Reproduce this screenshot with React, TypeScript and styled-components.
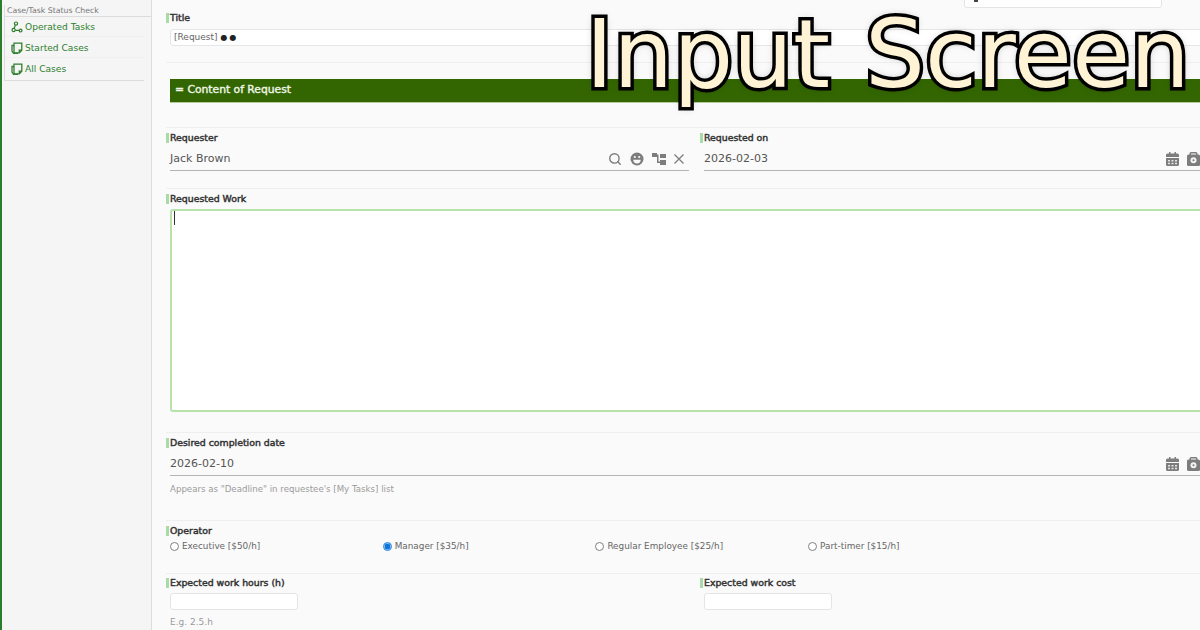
import React from "react";
import styled, { createGlobalStyle } from "styled-components";
import { Search } from "lucide-react";

const GlobalStyle = createGlobalStyle`
    html, body {
        margin: 0;
        padding: 0;
        width: 1200px;
        height: 630px;
        overflow: hidden;
        background: #fafafa;
        font-family: "DejaVu Sans", sans-serif;
    }
`

const Page = styled.div`
    display: flex;
    position: relative;
    width: 1200px;
    height: 630px;
    overflow: hidden;
    border-left: 2px solid #2a7d2a;
    box-sizing: border-box;
`

const Sidebar = styled.aside`
    flex: 0 0 150px;
    box-sizing: border-box;
    padding: 5px 0 0 2px;
    background: #f5f5f5;
    border-right: 1px solid #dddddd;
`

const SideTitle = styled.div`
    height: 12px;
    box-sizing: border-box;
    padding: 1px 0 0 2px;
    border-left: 1px solid #dcdcdc;
    border-bottom: 1px solid #dcdcdc;
    font-size: 7.75px;
    line-height: 10px;
    color: #777777;
`

const SideList = styled.ul`
    margin: 0;
    padding: 0;
    width: 139px;
    list-style: none;
    border-left: 1px solid #dcdcdc;
    border-bottom: 1px solid #dcdcdc;
`

const SideItem = styled.li`
    display: flex;
    align-items: center;
    gap: 2px;
    height: 20px;
    padding: 1px 0 0 6px;
    box-sizing: border-box;
    border-bottom: 1px solid #efefef;
    margin-bottom: 1px;
    font-size: 9.1px;
    color: #2f7f2f;

    &:last-child {
        height: 21px;
        padding: 0 0 2px 6px;
        border-bottom: 0;
        margin-bottom: 0;
    }
`

const Main = styled.main`
    flex: 0 0 1068px;
    box-sizing: border-box;
    padding: 0 0 0 14px;
`

const TopSearch = styled.div`
    position: absolute;
    top: -10px;
    left: 962px;
    box-sizing: border-box;
    width: 198px;
    height: 18px;
    background: #ffffff;
    border: 1px solid #e4e4e4;
    border-radius: 3px;
`

const SearchTip = styled.div`
    width: 4px;
    height: 2px;
    margin: 9px 0 0 9px;
    background: #444444;
`

const Section = styled.section<{ $height: number; $pad?: number; $first?: boolean }>`
    box-sizing: border-box;
    height: ${(p) => p.$height}px;
    padding-top: ${(p) => p.$pad ?? 5}px;
    border-top: ${(p) => (p.$first ? "0" : "1px solid #efefef")};
`

const Columns = styled.div`
    display: grid;
    grid-template-columns: 534px 534px;
`

// bold here is smeared regular, the original has no real bold face
const Label = styled.div`
    height: 10px;
    padding-left: 1px;
    border-left: 3px solid #a9dba9;
    font-size: 9.35px;
    line-height: 10px;
    color: #333333;
    -webkit-text-stroke: 0.45px #333333;
`

const TitleInput = styled.div`
    box-sizing: border-box;
    height: 17px;
    margin: 6px 0 0 4px;
    padding-left: 3px;
    background: #ffffff;
    border: 1px solid #e6e6e6;
    border-radius: 3px;
    font-size: 9px;
    line-height: 14px;
    color: #666666;
`

const Dots = styled.span`
    font-size: 8px;
    letter-spacing: 2px;
    color: #222222;
`

const BannerWrap = styled.div`
    height: 65px;
    padding: 16px 0 0 4px;
    box-sizing: border-box;
    border-top: 1px solid #efefef;
`

const Banner = styled.div`
    box-sizing: border-box;
    height: 24px;
    padding-left: 5px;
    background: #336600;
    border-bottom: 1px solid #b5cba0;
    font-size: 10.75px;
    line-height: 21px;
    color: #eef5e6;
    -webkit-text-stroke: 0.4px #eef5e6;
`

const ValueRow = styled.div<{ $width?: number }>`
    display: flex;
    align-items: center;
    justify-content: space-between;
    box-sizing: border-box;
    width: ${(p) => p.$width ?? 1053}px;
    height: 27px;
    margin: 1px 0 0 4px;
    padding: 3px 5px 0 0;
    border-bottom: 1px solid #b4b4b4;
    font-size: 11px;
    color: #555555;
`

const Icons = styled.div`
    display: flex;
    align-items: center;
    gap: 8px;
    color: #7d7d7d;
`

const WorkArea = styled.div`
    box-sizing: border-box;
    height: 203px;
    margin: 5px 0 0 4px;
    padding: 0 2px;
    background: #ffffff;
    border: 2px solid #b7e3ab;
    border-radius: 3px;
`

const Caret = styled.div`
    width: 1px;
    height: 14px;
    background: #333333;
`

const Hint = styled.div<{ $size: number; $gap: number }>`
    margin: ${(p) => p.$gap}px 0 0 4px;
    font-size: ${(p) => p.$size}px;
    line-height: 11px;
    color: #9a9a9a;
`

const Radios = styled.div`
    display: grid;
    grid-template-columns: repeat(4, 212.7px);
    margin: 3px 0 0 4px;
`

const RadioItem = styled.label`
    display: flex;
    align-items: center;
    gap: 3px;
    height: 14px;
    font-size: 8.85px;
    color: #666666;
`

const RadioDot = styled.span<{ $on?: boolean }>`
    box-sizing: border-box;
    width: 9px;
    height: 9px;
    background: ${(p) => (p.$on ? "#0f75d8" : "#ffffff")};
    border: 1px solid ${(p) => (p.$on ? "#3f97ea" : "#808080")};
    border-radius: 50%;
    box-shadow: ${(p) => (p.$on ? "inset 0 0 0 0.6px #d6e9fb" : "none")};
`

const SmallInput = styled.div`
    box-sizing: border-box;
    width: 128px;
    height: 17px;
    margin: 5px 0 0 4px;
    background: #ffffff;
    border: 1px solid #e4e4e4;
    border-radius: 3px;
`

const Overlay = styled.h1`
    position: absolute;
    top: 4px;
    right: 10px;
    margin: 0;
    font-family: "DejaVu Sans", sans-serif;
    font-size: 94.5px;
    font-weight: normal;
    line-height: 100px;
    word-spacing: 5px;
    white-space: nowrap;
    color: #fff3d6;
    -webkit-text-stroke: 7px #000000;
    paint-order: stroke fill;
    text-shadow: 0 0 8px rgba(0, 0, 0, 0.35);
`

const TasksIcon = () => (
    <svg width="12" height="12" viewBox="0 0 12 12" fill="none" stroke="#2f7f2f" strokeWidth="1.2">
        <circle cx="5" cy="2.6" r="1.6" />
        <circle cx="2.6" cy="9" r="1.6" />
        <circle cx="9.6" cy="9.6" r="1.4" />
        <path d="M4.4 4.2 3 7.4M4.4 9.4h3.6" />
    </svg>
)

const CasesIcon = () => (
    <svg width="12" height="12" viewBox="0 0 12 12" fill="none" stroke="#2f7f2f" strokeWidth="1.3">
        <path d="M3 1.200h7.800v7L8.300 10.800H3z" />
        <path d="M3 3.500H1v5.500l1.500 2.300H7" />
        <path d="M8.300 10.800V8.200h2.500" />
    </svg>
)

const FaceIcon = () => (
    <svg width="14" height="14" viewBox="0 0 14 14">
        <circle cx="7" cy="7" r="6.500" fill="#7d7d7d" />
        <circle cx="4.800" cy="5" r="1.100" fill="#fafafa" />
        <circle cx="9.200" cy="5" r="1.100" fill="#fafafa" />
        <path d="M3.300 7.800h7.400a3.700 3.700 0 0 1-7.400 0z" fill="#fafafa" />
    </svg>
)

const OrgIcon = () => (
    <svg width="14" height="12" viewBox="0 0 14 12" fill="#7d7d7d">
        <rect x="0" y="0" width="5" height="4" />
        <rect x="8" y="1" width="6" height="4" />
        <rect x="8" y="7" width="6" height="5" />
        <path d="M5 1.500h1.500v7H8v1.500H5z" />
    </svg>
)

const CloseIcon = () => (
    <svg width="10" height="10" viewBox="0 0 10 10" fill="none" stroke="#7d7d7d" strokeWidth="1.300">
        <path d="M0.500 0.500l9 9M9.500 0.500l-9 9" />
    </svg>
)

const CalendarIcon = () => (
    <svg width="13" height="14" viewBox="0 0 13 14">
        <path d="M0 3a1.500 1.500 0 0 1 1.500-1.500H3V0h1.500v1.500h4V0H10v1.500h1.500A1.500 1.500 0 0 1 13 3v2H0z" fill="#7d7d7d" />
        <path d="M0 6h13v6.500a1.500 1.500 0 0 1-1.500 1.500h-10A1.500 1.500 0 0 1 0 12.500z" fill="#7d7d7d" />
        <path d="M2 8h2v1.500H2zM5.500 8h2v1.500h-2zM9 8h2v1.500H9zM2 10.800h2v1.500H2zM5.500 10.800h2v1.500h-2zM9 10.800h2v1.500H9z" fill="#e6e6e6" />
    </svg>
)

const ClockIcon = () => (
    <svg width="13" height="14" viewBox="0 0 13 14">
        <path d="M2.500 3V1.500A1.500 1.500 0 0 1 4 0h5a1.500 1.500 0 0 1 1.500 1.500V3H9V1.500H4V3z" fill="#7d7d7d" />
        <rect x="0" y="2.500" width="13" height="11.500" rx="1.500" fill="#7d7d7d" />
        <circle cx="6.500" cy="8.300" r="3" fill="#f4f4f4" />
        <circle cx="6.500" cy="8.300" r="1" fill="#7d7d7d" />
    </svg>
)

const DateIcons = () => (
    <Icons>
        <CalendarIcon />
        <ClockIcon />
        <CloseIcon />
    </Icons>
)

export default function App() {
    return (
        <>
            <GlobalStyle />
            <Page>
                <Sidebar>
                    <SideTitle>Case/Task Status Check</SideTitle>
                    <SideList>
                        <SideItem><TasksIcon />Operated Tasks</SideItem>
                        <SideItem><CasesIcon />Started Cases</SideItem>
                        <SideItem><CasesIcon />All Cases</SideItem>
                    </SideList>
                </Sidebar>
                <Main>
                    <Section $first $pad={13} $height={62}>
                        <Label>Title</Label>
                        <TitleInput>[Request] <Dots>●●</Dots></TitleInput>
                    </Section>
                    <BannerWrap><Banner>= Content of Request</Banner></BannerWrap>
                    <Section $height={61}>
                        <Columns>
                            <div>
                                <Label>Requester</Label>
                                <ValueRow $width={519}>
                                    Jack Brown
                                    <Icons>
                                        <Search size={14} strokeWidth={2.4} />
                                        <FaceIcon />
                                        <OrgIcon />
                                        <CloseIcon />
                                    </Icons>
                                </ValueRow>
                            </div>
                            <div>
                                <Label>Requested on</Label>
                                <ValueRow $width={519}>
                                    2026-02-03
                                    <DateIcons />
                                </ValueRow>
                            </div>
                        </Columns>
                    </Section>
                    <Section $height={244}>
                        <Label>Requested Work</Label>
                        <WorkArea><Caret /></WorkArea>
                    </Section>
                    <Section $height={88}>
                        <Label>Desired completion date</Label>
                        <ValueRow>
                            2026-02-10
                            <DateIcons />
                        </ValueRow>
                        <Hint $size={8.65} $gap={8}>Appears as "Deadline" in requestee's [My Tasks] list</Hint>
                    </Section>
                    <Section $height={53}>
                        <Label>Operator</Label>
                        <Radios>
                            <RadioItem><RadioDot />Executive [$50/h]</RadioItem>
                            <RadioItem><RadioDot $on />Manager [$35/h]</RadioItem>
                            <RadioItem><RadioDot />Regular Employee [$25/h]</RadioItem>
                            <RadioItem><RadioDot />Part-timer [$15/h]</RadioItem>
                        </Radios>
                    </Section>
                    <Section $pad={4} $height={57}>
                        <Columns>
                            <div>
                                <Label>Expected work hours (h)</Label>
                                <SmallInput />
                                <Hint $size={9} $gap={7}>E.g. 2.5.h</Hint>
                            </div>
                            <div>
                                <Label>Expected work cost</Label>
                                <SmallInput />
                            </div>
                        </Columns>
                    </Section>
                </Main>
                <TopSearch><SearchTip /></TopSearch>
                <Overlay>Input Screen</Overlay>
            </Page>
        </>
    );
}
